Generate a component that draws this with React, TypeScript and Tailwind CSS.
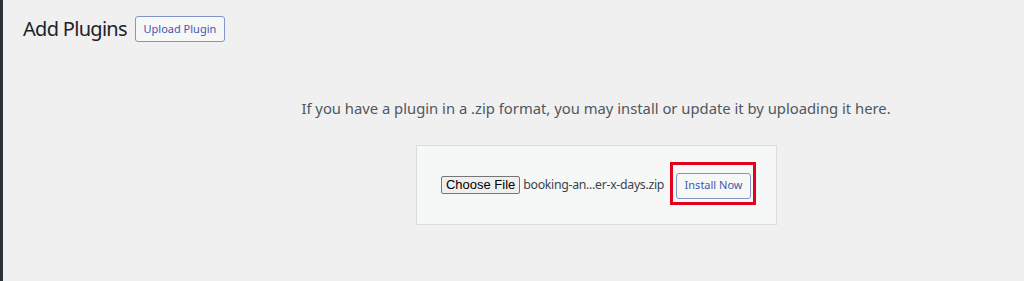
const App = () => (
  <div className="flex h-[281px] w-[1024px] overflow-hidden bg-[#f0f0f1]">
    <div className="w-[3px] shrink-0 bg-[#2c3338]" />
    <main className="flex flex-col pl-[20px]">
      <div className="flex items-center gap-[8px] pt-[15px]">
        <h1 className="text-[20px] leading-[28px] font-normal tracking-[-0.7px] text-[#1d2327] [font-family:'Noto_Sans',sans-serif]">
          Add Plugins
        </h1>
        <button className="h-[26px] w-[90px] rounded-[3px] border border-[#8593cc] bg-[#f6f7f7] text-[11px] text-[#4257ad] [font-family:'Noto_Sans',sans-serif]">
          Upload Plugin
        </button>
      </div>

      <section className="flex w-[1146px] flex-col items-center">
        <p className="mt-[54px] text-[14.8px] leading-[22px] text-[#50575e] [font-family:'Noto_Sans',sans-serif]">
          If you have a plugin in a .zip format, you may install or update it by uploading it here.
        </p>
        <div className="mt-[26px] flex h-[80px] w-[361px] items-center justify-center border border-[#dcdcde] bg-[#f6f7f7]">
          <span className="h-[18px] rounded-[2px] border border-[#767676] bg-[#efefef] px-[4px] text-[13px] leading-[16px] text-black [font-family:'Liberation_Sans',sans-serif]">
            Choose File
          </span>
          <span className="ml-[3px] text-[12.3px] tracking-[-0.3px] text-[#3c434a] [font-family:'Noto_Sans',sans-serif]">
            booking-an...er-x-days.zip
          </span>
          <div className="relative ml-[12px]">
            <button className="h-[26px] w-[75px] rounded-[3px] border border-[#8593cc] bg-[#f6f7f7] text-[11px] text-[#4257ad] [font-family:'Noto_Sans',sans-serif]">
              Install Now
            </button>
            <div className="pointer-events-none absolute -top-[9px] -bottom-[6px] -left-[6px] -right-[5px] border-[3px] border-[#e3001b]" />
          </div>
        </div>
      </section>
    </main>
  </div>
);

export default App;
